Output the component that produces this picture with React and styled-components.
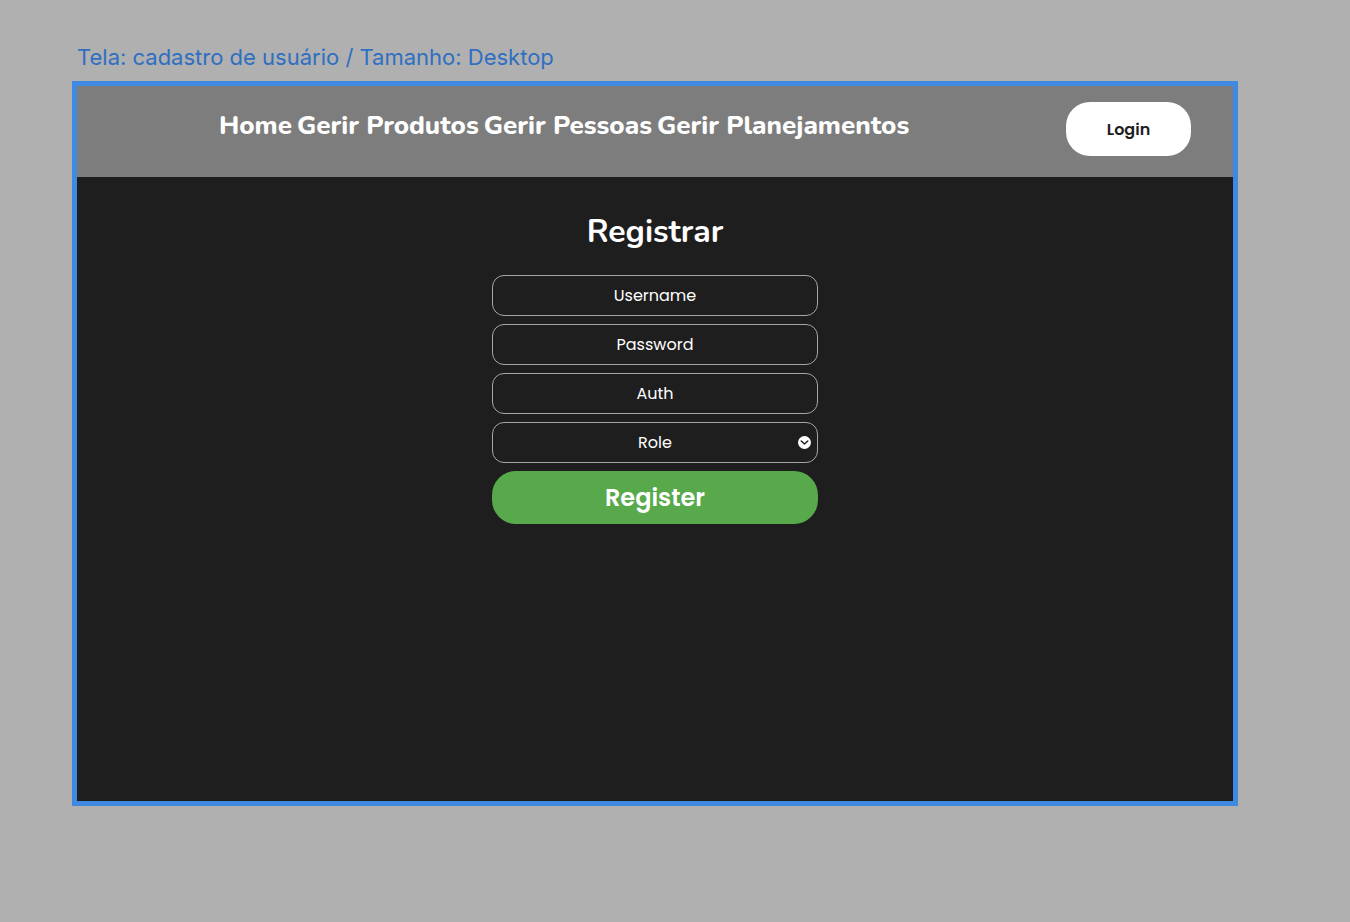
import React from "react";
import styled, { createGlobalStyle } from "styled-components";

const GlobalStyle = createGlobalStyle`
  *, *::before, *::after { box-sizing: border-box; }
  body { margin: 0; background: #b0b0b0; }
`;

const rounded = `"Nunito", "Open Sans", "Noto Sans", sans-serif`;
const geometric = `"Poppins", "Inter", sans-serif`;

const Canvas = styled.div`
  min-height: 100vh;
  padding: 42px 112px 116px 72px;
  display: flex;
  flex-direction: column;
`;

const FrameLabel = styled.p`
  margin: 0;
  padding: 0 5px 9px;
  font: 400 22px/30px "Inter", sans-serif;
  color: #2e6fc2;
`;

const Frame = styled.div`
  flex: 1;
  display: flex;
  flex-direction: column;
  border: 5px solid #3f8ae0;
  background: #1e1e1e;
`;

const Header = styled.header`
  display: flex;
  justify-content: space-between;
  align-items: flex-start;
  padding: 16px 42px 21px 142px;
  background: #7d7d7d;
`;

const Nav = styled.nav`
  display: flex;
  gap: 5px;
  padding-top: 6px;
`;

const NavLink = styled.a`
  font: 800 26px/36px ${rounded};
  color: #fff;
  text-decoration: none;
  white-space: nowrap;
`;

const Button = styled.button`
  border: 0;
  border-radius: 24px;
  cursor: pointer;
  font-family: ${geometric};
  font-weight: 600;
`;

const LoginButton = styled(Button)`
  width: 125px;
  height: 54px;
  background: #fff;
  color: #1e1e1e;
  font-size: 16px;
`;

const Main = styled.main`
  display: flex;
  flex-direction: column;
  align-items: center;
  padding: 32px 16px;
`;

const Title = styled.h1`
  margin: 0 0 20px;
  font: 700 32px/46px ${rounded};
  color: #fff;
`;

const Form = styled.form`
  display: flex;
  flex-direction: column;
  gap: 8px;
  width: 100%;
  max-width: 326px;
`;

const controlStyle = `
  width: 100%;
  height: 41px;
  padding: 0 16px;
  border: 1px solid #a6a6a6;
  border-radius: 12px;
  background: transparent;
  color: #fff;
  font: 400 16px/24px ${geometric};
  text-align: center;
`;

const TextField = styled.input`
  ${controlStyle}
  &::placeholder { color: #fff; opacity: 1; }
`;

const SelectWrap = styled.div`
  position: relative;
`;

const Select = styled.select`
  ${controlStyle}
  display: block;
  appearance: none;
  text-align-last: center;
`;

const Chevron = styled.svg`
  position: absolute;
  right: 7px;
  top: 14px;
  pointer-events: none;
`;

const RegisterButton = styled(Button)`
  height: 53px;
  background: #58a94c;
  color: #fff;
  font-size: 24px;
`;

const links = ["Home", "Gerir Produtos", "Gerir Pessoas", "Gerir Planejamentos"];

export default function App() {
  return (
    <>
      <GlobalStyle />
      <Canvas>
        <FrameLabel>Tela: cadastro de usuário / Tamanho: Desktop</FrameLabel>
        <Frame>
          <Header>
            <Nav>
              {links.map((label) => (
                <NavLink key={label} href="#">{label}</NavLink>
              ))}
            </Nav>
            <LoginButton type="button">Login</LoginButton>
          </Header>
          <Main>
            <Title>Registrar</Title>
            <Form onSubmit={(e) => e.preventDefault()}>
              <TextField type="text" placeholder="Username" aria-label="Username" />
              <TextField type="password" placeholder="Password" aria-label="Password" />
              <TextField type="text" placeholder="Auth" aria-label="Auth" />
              <SelectWrap>
                <Select aria-label="Role" defaultValue="">
                  <option value="">Role</option>
                </Select>
                <Chevron width="13" height="13" viewBox="0 0 13 13" aria-hidden="true">
                  <circle cx="6.5" cy="6.5" r="6.5" fill="#fff" />
                  <path d="M3.2 4.9 6.5 8 9.8 4.9" fill="none" stroke="#1e1e1e" strokeWidth="1.4" strokeLinecap="round" strokeLinejoin="round" />
                </Chevron>
              </SelectWrap>
              <RegisterButton type="submit">Register</RegisterButton>
            </Form>
          </Main>
        </Frame>
      </Canvas>
    </>
  );
}
